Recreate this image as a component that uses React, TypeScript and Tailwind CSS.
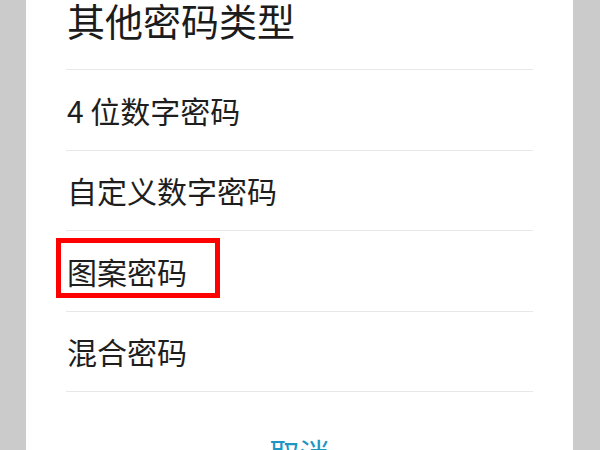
import React from "react";

const items = ["4 位数字密码", "自定义数字密码", "图案密码", "混合密码"];

export default function App() {
  return (
    <div
      className="w-[600px] h-[450px] bg-[#cbcbcb] overflow-hidden flex"
      style={{ fontFamily: '"Noto Sans CJK SC", "Noto Sans", sans-serif' }}
    >
      <div className="ml-[26px] w-[547px] h-full bg-white px-[40px] flex flex-col">
        <div className="h-[70px] shrink-0 border-b-[1.5px] border-[#e8e8e8]">
          <div className="text-[38px] leading-[40px] text-[#1c1c1c] pl-[1px]">其他密码类型</div>
        </div>
        {items.map((t, i) => (
          <div
            key={t}
            className="relative h-[80.5px] shrink-0 flex items-center border-b-[1.5px] border-[#e8e8e8] text-[30px] leading-[40px] text-[#1e1e1e] pl-[1px]"
          >
            {t}
            {i === 2 && (
              <div className="absolute left-[-10px] top-[7px] w-[164px] h-[60px] border-[5px] border-[#ff0000]" />
            )}
          </div>
        ))}
        <div className="mt-[40px] text-center text-[30px] leading-[40px] text-[#1f95c4]">取消</div>
      </div>
    </div>
  );
}
